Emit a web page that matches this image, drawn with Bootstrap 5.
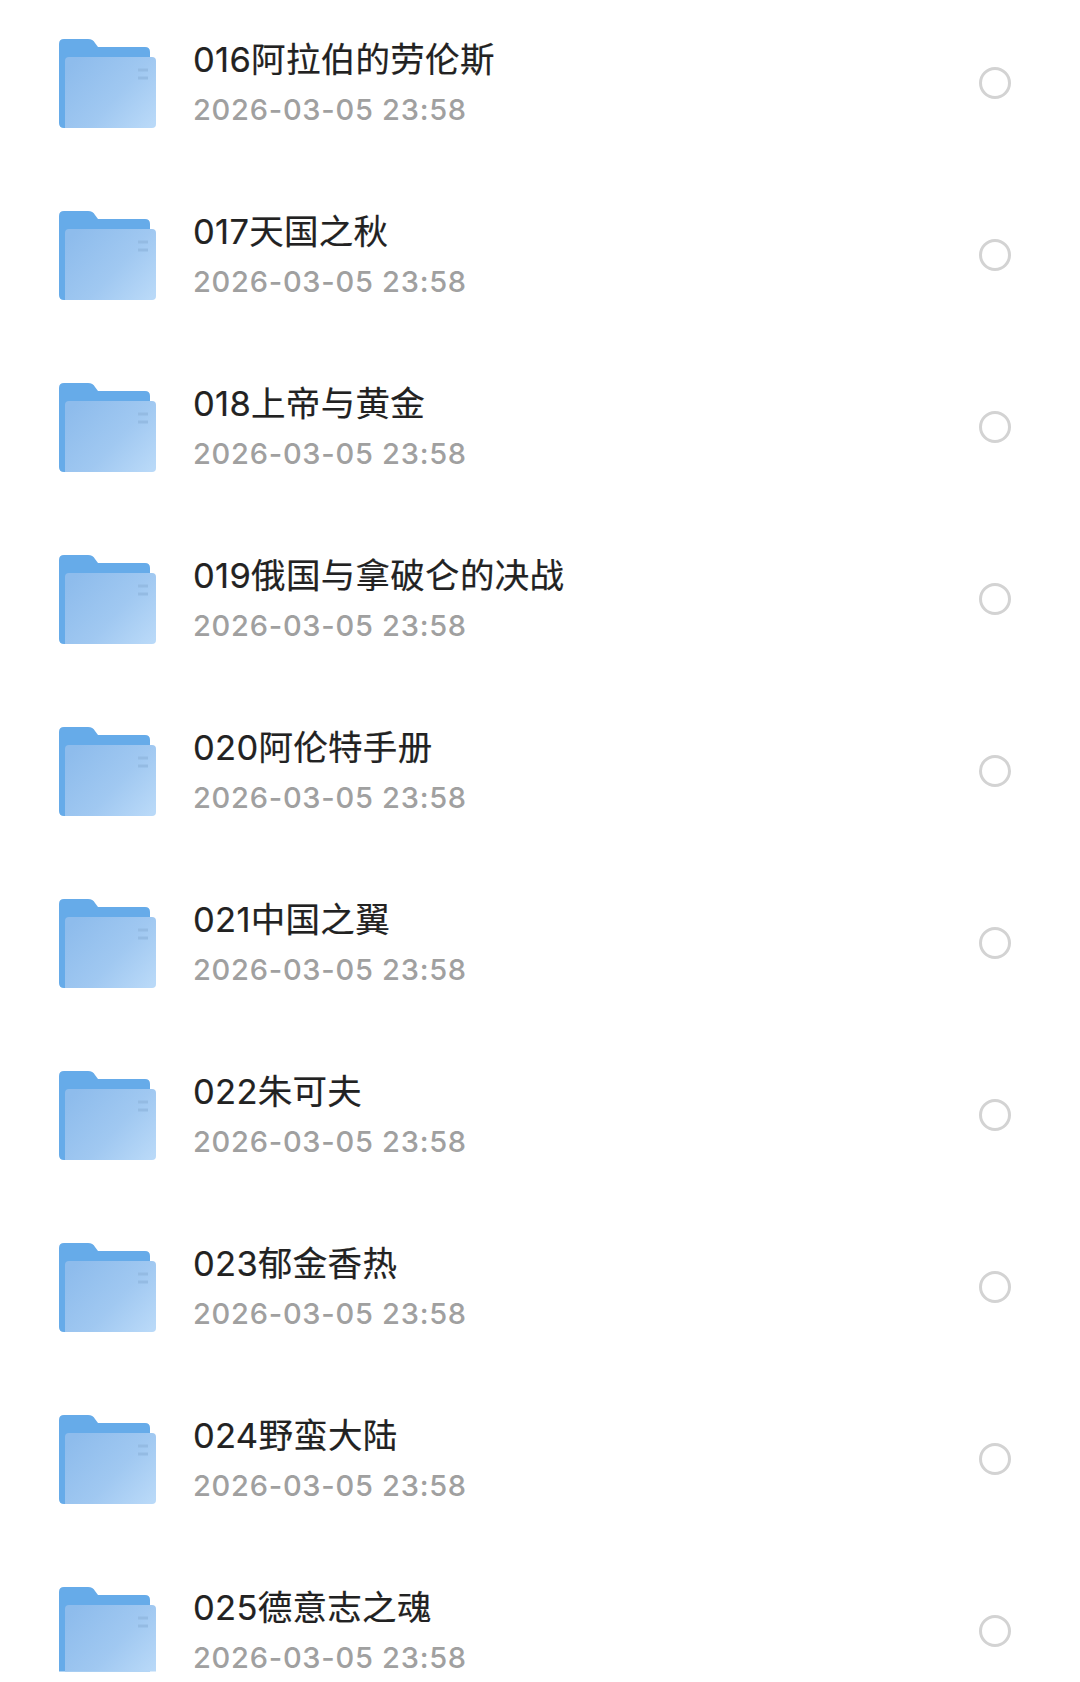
<!DOCTYPE html>
<html lang="zh-CN">
<head>
  <meta charset="UTF-8">
  <title>文件列表</title>
  <link href="https://cdn.jsdelivr.net/npm/bootstrap@5.3.3/dist/css/bootstrap.min.css" rel="stylesheet">
  <style>
    html, body { height: 1682px; overflow: hidden; background: #fff; }
    .file-list { margin-top: -3px; }
    .file-row { height: 172px; padding: 0 69px 0 59px; border: 0; }
    .folder-icon { width: 97px; height: 89px; flex: none; margin-right: 37px; }
    .file-row:last-child .folder-icon { clip-path: inset(0 0 4px 0); }
    .file-name { font: 400 34.5px/44px Inter, "Noto Sans CJK SC", sans-serif; letter-spacing: .3px; color: #222; -webkit-text-stroke: .2px #222; }
    .file-date { font: 500 29px/38px Inter, "Noto Sans CJK SC", sans-serif; color: #a0a0a0; letter-spacing: .75px; margin-top: 9px; }
    .file-check.form-check-input { width: 32px; height: 32px; margin: -1px 0 0 auto; border: 3px solid #d3d3d3; background-color: #fff; flex: none; }
  </style>
</head>
<body>

  <svg width="0" height="0" class="d-block">
    <defs>
      <linearGradient id="folderFront" x1="0" y1=".2" x2="1" y2=".9">
        <stop offset="0" stop-color="#8ebcec"/>
        <stop offset=".55" stop-color="#a0c8f1"/>
        <stop offset="1" stop-color="#b9d9f8"/>
      </linearGradient>
      <symbol id="folder" viewBox="0 0 97 89">
        <path d="M5 0H29Q34 0 36 4L39 8H86Q91 8 91 13V86L5 89Q0 89 0 84V5Q0 0 5 0Z" fill="#66abe9"/>
        <path d="M10 18H93Q97 18 97 22V85Q97 89 93 89H6V22Q6 18 10 18Z" fill="url(#folderFront)"/>
        <path d="M79 31H89M79 39H89" stroke="#94bbe3" stroke-width="3"/>
      </symbol>
    </defs>
  </svg>

  <div class="list-group list-group-flush file-list" id="fileList"></div>

  <script src="https://cdn.jsdelivr.net/npm/bootstrap@5.3.3/dist/js/bootstrap.bundle.min.js"></script>
  <script>
    const names = ["016阿拉伯的劳伦斯", "017天国之秋", "018上帝与黄金", "019俄国与拿破仑的决战", "020阿伦特手册",
      "021中国之翼", "022朱可夫", "023郁金香热", "024野蛮大陆", "025德意志之魂"];
    document.getElementById("fileList").innerHTML = names.map(name => `
      <div class="list-group-item d-flex align-items-center file-row">
        <svg class="folder-icon"><use href="#folder"/></svg>
        <div>
          <div class="file-name">${name}</div>
          <div class="file-date">2026-03-05 23:58</div>
        </div>
        <input class="form-check-input file-check" type="radio" aria-label="${name}">
      </div>`).join("");
  </script>
</body>
</html>
